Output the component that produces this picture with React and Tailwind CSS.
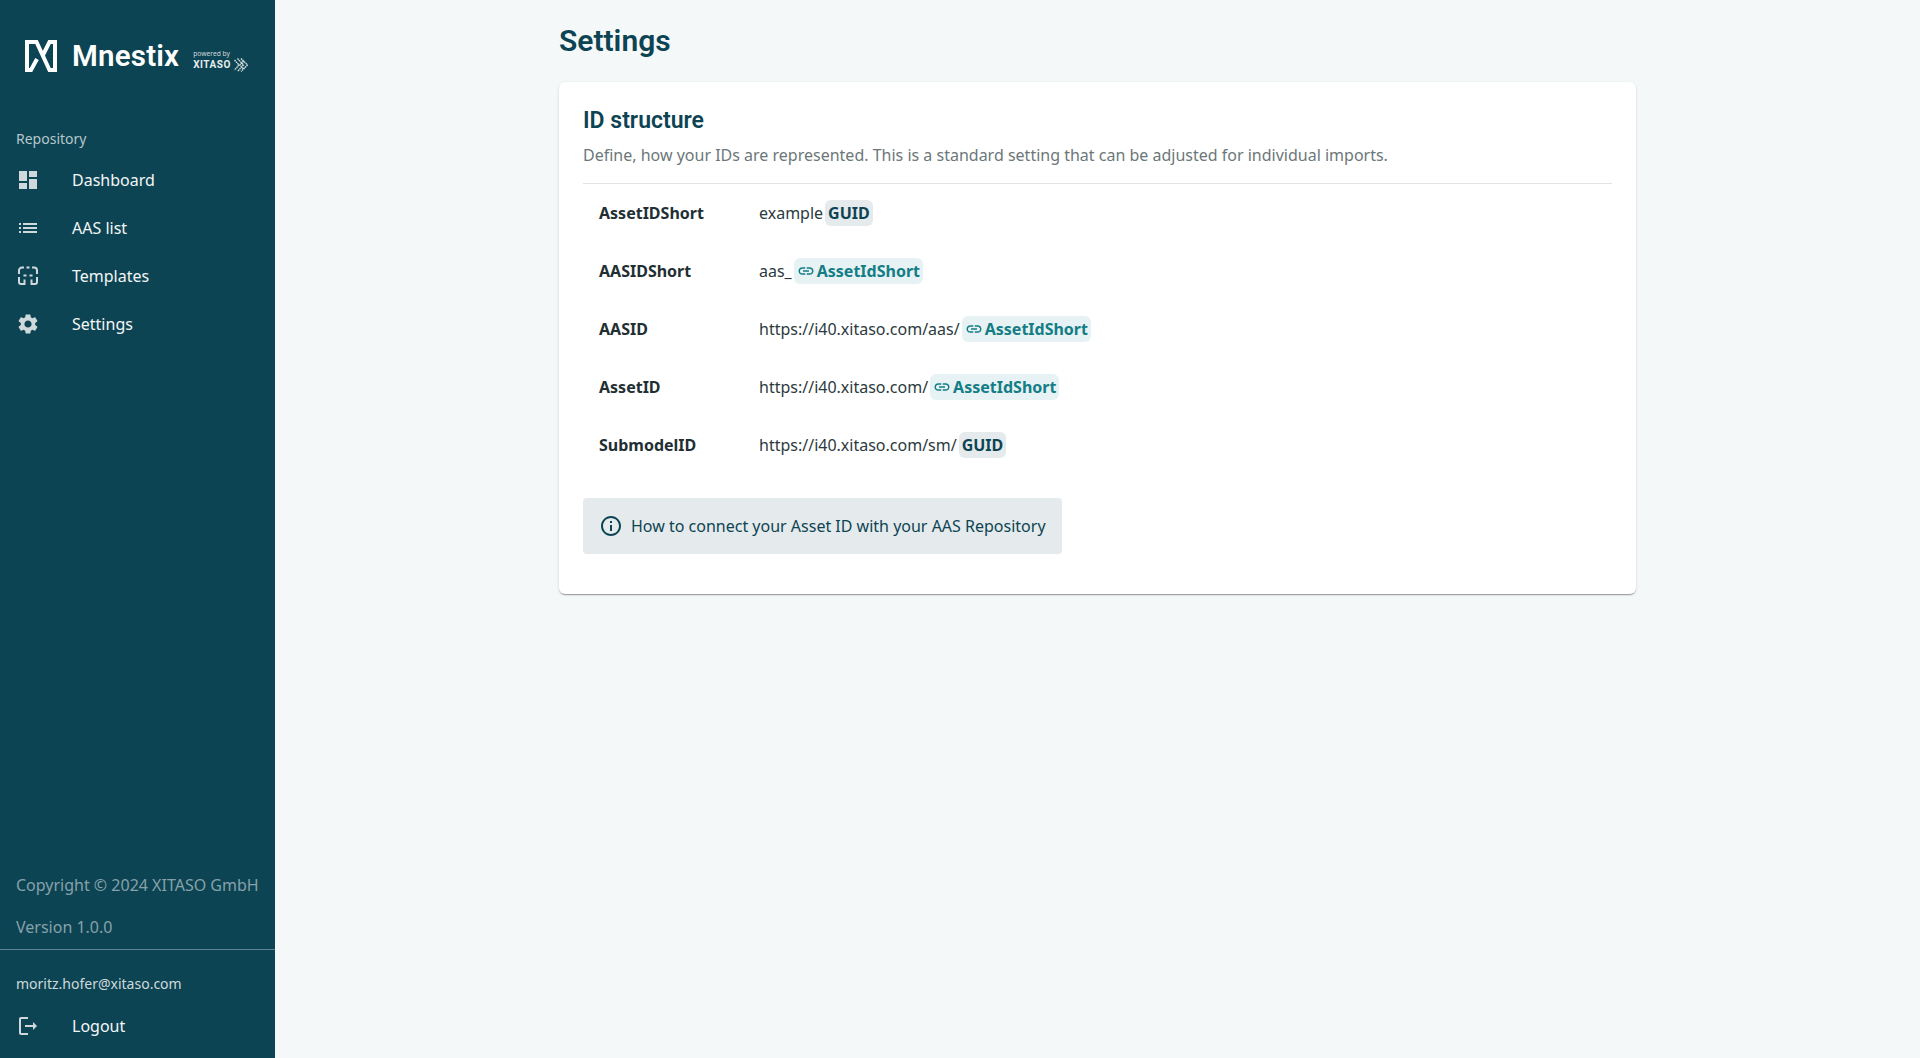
import React from "react";

const Base = ({ d, className, size = 24 }) => (
  <svg viewBox="0 0 24 24" width={size} height={size} fill="currentColor" className={className}><path d={d} /></svg>
);
const paths = {
  dash: "M3 13h8V3H3v10zm0 8h8v-6H3v6zm10 0h8V11h-8v10zm0-18v6h8V3h-8z",
  list: "M3 13h2v-2H3v2zm0 4h2v-2H3v2zm0-8h2V7H3v2zm4 4h14v-2H7v2zm0 4h14v-2H7v2zM7 7v2h14V7H7z",
  gear: "M19.14 12.94c.04-.3.06-.61.06-.94 0-.32-.02-.64-.07-.94l2.03-1.58c.18-.14.23-.41.12-.61l-1.92-3.32c-.12-.22-.37-.29-.59-.22l-2.39.96c-.5-.38-1.03-.7-1.62-.94l-.36-2.54c-.04-.24-.24-.41-.48-.41h-3.84c-.24 0-.43.17-.47.41l-.36 2.54c-.59.24-1.13.57-1.62.94l-2.39-.96c-.22-.08-.47 0-.59.22L2.74 8.87c-.12.21-.08.47.12.61l2.03 1.58c-.05.3-.09.63-.09.94s.02.64.07.94l-2.03 1.58c-.18.14-.23.41-.12.61l1.92 3.32c.12.22.37.29.59.22l2.39-.96c.5.38 1.03.7 1.62.94l.36 2.54c.05.24.24.41.48.41h3.84c.24 0 .44-.17.47-.41l.36-2.54c.59-.24 1.13-.56 1.62-.94l2.39.96c.22.08.47 0 .59-.22l1.92-3.32c.12-.22.07-.47-.12-.61l-2.01-1.58zM12 15.6c-1.98 0-3.6-1.62-3.6-3.6s1.62-3.6 3.6-3.6 3.6 1.62 3.6 3.6-1.62 3.6-3.6 3.6z",
  logout: "M5 5h7V3H5c-1.1 0-2 .9-2 2v14c0 1.1.9 2 2 2h7v-2H5V5zm16 7-4-4v3H9v2h8v3l4-4z",
  link: "M3.9 12c0-1.71 1.39-3.1 3.1-3.1h4V7H7c-2.76 0-5 2.24-5 5s2.24 5 5 5h4v-1.9H7c-1.71 0-3.1-1.39-3.1-3.1zM8 13h8v-2H8v2zm9-6h-4v1.9h4c1.71 0 3.1 1.39 3.1 3.1s-1.39 3.1-3.1 3.1h-4V17h4c2.76 0 5-2.24 5-5s-2.24-5-5-5z",
  info: "M11 7h2v2h-2zm0 4h2v6h-2zm1-9C6.48 2 2 6.48 2 12s4.48 10 10 10 10-4.48 10-10S17.52 2 12 2zm0 18c-4.41 0-8-3.59-8-8s3.59-8 8-8 8 3.59 8 8-3.59 8-8 8z",
};

const TemplatesIcon = ({ className }) => (
  <svg viewBox="0 0 24 24" width="24" height="24" fill="none" stroke="currentColor" strokeWidth="2" className={className}>
    <path d="M3 10V6.5A3 3 0 0 1 6 3.5h2M10.5 3.5h3M16 3.5h2a3 3 0 0 1 3 3V10M3 13v5a2 2 0 0 0 2 2h3.5v-4.5M21 13v5a2 2 0 0 1-2 2h-3.5v-4.5M7.5 11.5h3M13.5 11.5h3" />
  </svg>
);

const NavItem = ({ icon, label }) => (
  <div className="flex items-center h-12 pl-4">
    {icon === "tpl" ? <TemplatesIcon className="text-[#cfd9dc] shrink-0" /> : <Base d={paths[icon]} className="text-[#cfd9dc] shrink-0" />}
    <span className="ml-8 text-base leading-6 text-[#f3f6f7]">{label}</span>
  </div>
);

const Guid = () => (
  <span className="inline-flex items-center h-[26px] px-[3px] rounded-md bg-[#e5eaec] text-[#0d4453] font-bold">GUID</span>
);
const Ref = () => (
  <span className="inline-flex items-center h-[26px] px-[3px] rounded-md bg-[#e6f2f3] text-[#147d86] font-bold">
    <Base d={paths.link} size={18} className="mr-[2px]" />
    AssetIdShort
  </span>
);

const Row = ({ label, text, chip }) => (
  <div className="flex items-center h-[58px] pl-4">
    <div className="w-[160px] font-bold text-[#1f2f33]">{label}</div>
    <div className="flex items-center gap-[2px] text-[#2b3a3e]">
      <span>{text}</span>
      {chip === "guid" ? <Guid /> : <Ref />}
    </div>
  </div>
);

const LogoMark = () => (
  <svg viewBox="0 0 32 32" width="32" height="32" fill="none" stroke="#fff" strokeWidth="4" strokeLinejoin="miter" className="shrink-0">
    <path d="M2 32V2H11.5L24.5 30H32M30 32V2H24.5L17.5 16M0 30H6L12 19" />
  </svg>
);

const XitasoMark = () => (
  <svg viewBox="0 0 14 14" width="14" height="14" fill="none" stroke="#d6dfe1" strokeWidth="1.4" strokeDasharray="1.6 .6">
    <path d="M0.5 2l4.5 5-4.5 5M3.5 0.5L9.5 7l-6 6.5M7 0.5L13.5 7 7 13.5M9.5 3L6 7l3.5 4" />
  </svg>
);

export default function App() {
  return (
    <div className="flex min-h-[1058px] bg-[#f5f8f9] font-['Noto_Sans',sans-serif]">
      <aside className="w-[275px] h-[1058px] shrink-0 flex flex-col bg-[#0d4453]">
        <div className="flex items-center pl-[25px] h-[56px] mt-[28px]">
          <LogoMark />
          <span className="ml-[15px] mt-[2px] text-[29.5px] leading-none font-semibold text-white font-['Roboto',sans-serif] tracking-[0.2px]">Mnestix</span>
          <div className="ml-[14px] mt-[8px] flex flex-col">
            <span className="text-[6.7px] leading-[9px] text-[#cfd9dc]">powered by</span>
            <div className="flex items-center gap-[3px]">
              <span className="text-[10px] leading-[11px] font-bold text-[#e6ecee] font-['Roboto',sans-serif] tracking-[0.5px]">XITASO</span>
              <XitasoMark />
            </div>
          </div>
        </div>
        <div className="mt-[45px] pl-4 text-sm leading-5 text-[#b6c7cb]">Repository</div>
        <div className="mt-[7px]">
          <NavItem icon="dash" label="Dashboard" />
          <NavItem icon="list" label="AAS list" />
          <NavItem icon="tpl" label="Templates" />
          <NavItem icon="gear" label="Settings" />
        </div>
        <div className="mt-auto">
          <div className="pl-4 text-base leading-6 text-[#86a1a9]">Copyright © 2024 XITASO GmbH</div>
          <div className="mt-[18px] pl-4 text-base leading-6 text-[#86a1a9]">Version 1.0.0</div>
          <div className="mt-[10px] border-t border-[#5c8591]" />
          <div className="mt-[24px] pl-4 text-sm leading-5 text-[#cfd9dc]">moritz.hofer@xitaso.com</div>
          <div className="mt-[8px] mb-[8px]"><NavItem icon="logout" label="Logout" /></div>
        </div>
      </aside>
      <main className="flex-1 min-w-0">
        <div className="w-[1125px] mx-auto px-6">
          <h1 className="mt-[21px] h-[40px] text-[30px] leading-[40px] font-semibold text-[#0d4453] font-['Roboto',sans-serif]">Settings</h1>
          <section className="mt-[21px] h-[512px] p-6 rounded-md bg-white shadow-[0_2px_1px_-1px_rgba(0,0,0,0.2),0_1px_1px_0_rgba(0,0,0,0.14),0_1px_3px_0_rgba(0,0,0,0.12)]">
            <h2 className="h-[30px] text-[23px] leading-[30px] font-semibold text-[#0d4453] font-['Roboto',sans-serif]">ID structure</h2>
            <p className="mt-[7px] text-base leading-6 text-[#6c7779]">Define, how your IDs are represented. This is a standard setting that can be adjusted for individual imports.</p>
            <div className="mt-[16px] border-t border-[#e1e4e5]" />
            <div>
              <Row label="AssetIDShort" text="example" chip="guid" />
              <Row label="AASIDShort" text="aas_" chip="ref" />
              <Row label="AASID" text="https://i40.xitaso.com/aas/" chip="ref" />
              <Row label="AssetID" text="https://i40.xitaso.com/" chip="ref" />
              <Row label="SubmodelID" text="https://i40.xitaso.com/sm/" chip="guid" />
            </div>
            <div className="mt-[24px] inline-flex items-center h-[56px] pl-[16px] pr-4 rounded-[4px] bg-[#e5eaec] text-[#0d4453]">
              <Base d={paths.info} />
              <span className="ml-[8px] leading-6">How to connect your Asset ID with your AAS Repository</span>
            </div>
          </section>
        </div>
      </main>
    </div>
  );
}
